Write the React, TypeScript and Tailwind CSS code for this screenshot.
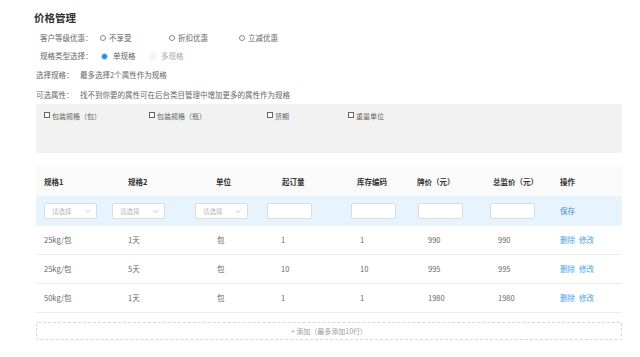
import React from "react";
import { ChevronDown } from "lucide-react";

const cols = "grid grid-cols-[74px_80px_72px_83px_67px_72px_68px_69px]";

const headers = [
  { label: "规格1", cls: "pl-[8px]" },
  { label: "规格2", cls: "pl-[18px]" },
  { label: "单位", cls: "pl-[26px]" },
  { label: "起订量", cls: "pl-[20px]" },
  { label: "库存编码", cls: "pl-[12px]" },
  { label: "牌价（元）", cls: "pl-[5px]" },
  { label: "总监价（元）", cls: "pl-[9px]" },
  { label: "操作", cls: "pl-[8px]" },
];

const dataPad = [
  "pl-[8px]",
  "pl-[18px]",
  "pl-[27px]",
  "pl-[19px]",
  "pl-[15px]",
  "pl-[16px]",
  "pl-[14px]",
];

const rows = [
  ["25kg/包", "1天", "包", "1", "1", "990", "990"],
  ["25kg/包", "5天", "包", "10", "10", "995", "995"],
  ["50kg/包", "1天", "包", "1", "1", "1980", "1980"],
];

function Radio({ label }: { label: string }) {
  return (
    <div className="flex items-center gap-[3px]">
      <span className="w-[6px] h-[6px] rounded-full border border-[#888] bg-white" />
      <span>{label}</span>
    </div>
  );
}

function Check({ label }: { label: string }) {
  return (
    <div className="flex items-center gap-[2px]">
      <span className="w-[6px] h-[6px] border border-[#666] bg-white -mt-[2px]" />
      <span>{label}</span>
    </div>
  );
}

function SelectBox() {
  return (
    <div className="w-[53px] h-[16px] border border-[#dcdcdc] rounded-[2px] bg-white flex items-center justify-between pl-[7px] pr-[5px] text-[6.5px] text-[#b5b5b5]">
      <span>请选择</span>
      <ChevronDown size={7} strokeWidth={2} className="text-[#999]" />
    </div>
  );
}

function InputBox() {
  return <div className="w-[45px] h-[16px] border border-[#dcdcdc] rounded-[2px] bg-white" />;
}

export default function App() {
  return (
    <div className="w-[640px] h-[357px] overflow-hidden bg-white text-[#666] text-[7.5px] leading-[12px] font-['Noto_Sans_CJK_SC',sans-serif]">
      <div className="pl-[36px] pt-[11px] w-[622px]">
        {/* Title */}
        <h1 className="-ml-[2px] text-[10.5px] leading-[14px] font-bold text-[#333]">价格管理</h1>

        {/* Options */}
        <div className="mt-[7px] pl-[4px] flex items-center">
          <span className="w-[60px]">客户等级优惠：</span>
          <div className="w-[69px]">
            <Radio label="不享受" />
          </div>
          <div className="w-[70px]">
            <Radio label="折扣优惠" />
          </div>
          <Radio label="立减优惠" />
        </div>

        <div className="mt-[6px] pl-[4px] flex items-center">
          <span className="w-[61px]">规格类型选择：</span>
          <div className="w-[48px] flex items-center gap-[5px]">
            <span className="w-[7px] h-[7px] rounded-full bg-[#1e8ff0] border border-[#bfe0fb]" />
            <span>单规格</span>
          </div>
          <div className="flex items-center gap-[5px] text-[#aaa]">
            <span className="w-[7px] h-[7px] rounded-full border border-[#ececec] bg-[#f7f7f7]" />
            <span>多规格</span>
          </div>
        </div>

        <div className="mt-[7px] flex items-center">
          <span className="w-[44px]">选择规格：</span>
          <span>最多选择2个属性作为规格</span>
        </div>

        <div className="mt-[8px] flex items-center">
          <span className="w-[44px]">可选属性：</span>
          <span>找不到你要的属性可在后台类目管理中增加更多的属性作为规格</span>
        </div>

        {/* Attribute box */}
        <div className="mt-[3px] h-[49px] bg-[#f2f2f2] pl-[8px] pt-[6px] flex items-start text-[7px]">
          <div className="w-[105px]">
            <Check label="包装规格（包）" />
          </div>
          <div className="w-[118px]">
            <Check label="包装规格（瓶）" />
          </div>
          <div className="w-[81px]">
            <Check label="货期" />
          </div>
          <Check label="重量单位" />
        </div>

        {/* Table */}
        <div className="mt-[14px]">
          <div className={`${cols} h-[29px] items-center bg-[#fafafa] font-bold text-[#333]`}>
            {headers.map((h) => (
              <div key={h.label} className={h.cls}>
                {h.label}
              </div>
            ))}
          </div>

          <div className={`${cols} h-[30px] items-center bg-[#e7f4fd]`}>
            <div className="pl-[8px]">
              <SelectBox />
            </div>
            <div className="pl-[2px]">
              <SelectBox />
            </div>
            <div className="pl-[5px]">
              <SelectBox />
            </div>
            <div className="pl-[5px]">
              <InputBox />
            </div>
            <div className="pl-[6px]">
              <InputBox />
            </div>
            <div className="pl-[6px]">
              <InputBox />
            </div>
            <div className="pl-[6px]">
              <InputBox />
            </div>
            <div className="pl-[8px] text-[#3b8fd6]">保存</div>
          </div>

          {rows.map((r, i) => (
            <div key={i} className={`${cols} h-[29px] items-center border-b border-[#ececec]`}>
              {r.map((v, j) => (
                <div key={j} className={dataPad[j]}>
                  {v}
                </div>
              ))}
              <div className="pl-[8px] flex gap-[4px] text-[#4aa3e8]">
                <span>删除</span>
                <span>修改</span>
              </div>
            </div>
          ))}
        </div>

        {/* Add row */}
        <div className="mt-[9px] h-[18px] border border-dashed border-[#d6d6d6] rounded-[2px] flex items-center justify-center text-[7px] text-[#999]">
          + 添加（最多添加10行）
        </div>
      </div>
    </div>
  );
}
